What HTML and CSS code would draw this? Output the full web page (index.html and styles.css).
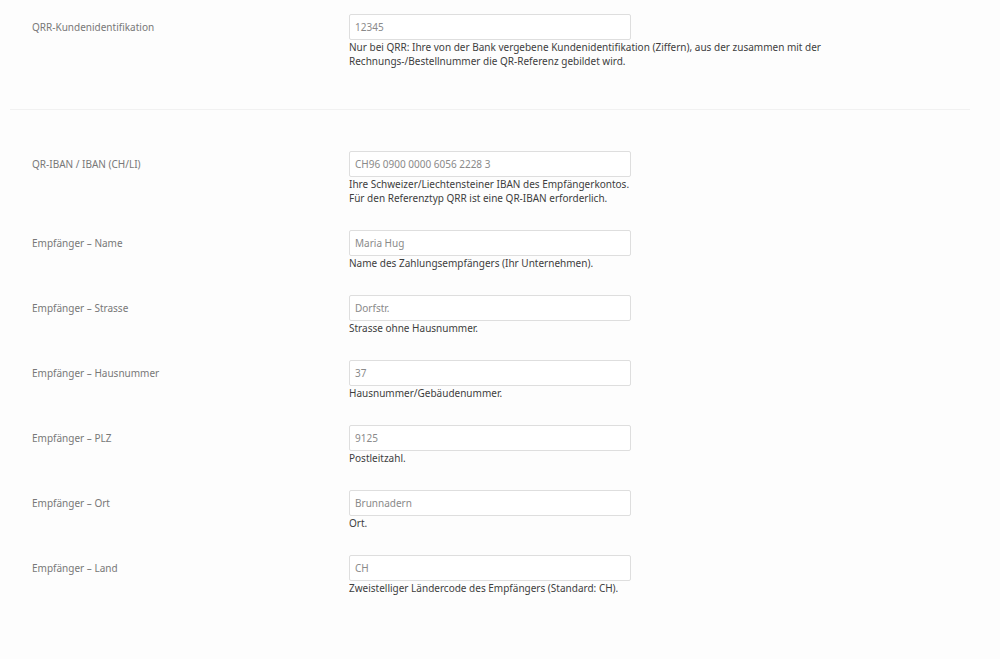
FILE: index.html
```html
<!DOCTYPE html>
<html lang="de">
<head>
<meta charset="utf-8">
<title>QR-Rechnung Einstellungen</title>
<link rel="stylesheet" href="styles.css">
</head>
<body>
<div class="page">
  <section class="section section-first">
    <div class="row">
      <label class="label">QRR-Kundenidentifikation</label>
      <div class="field">
        <div class="input">12345</div>
        <p class="help">Nur bei QRR: Ihre von der Bank vergebene Kundenidentifikation (Ziffern), aus der zusammen mit der Rechnungs-/Bestellnummer die QR-Referenz gebildet wird.</p>
      </div>
    </div>
  </section>
  <section class="section section-second">
    <div class="row">
      <label class="label">QR-IBAN / IBAN (CH/LI)</label>
      <div class="field">
        <div class="input">CH96 0900 0000 6056 2228 3</div>
        <p class="help">Ihre Schweizer/Liechtensteiner IBAN des Empfängerkontos.<br>Für den Referenztyp QRR ist eine QR-IBAN erforderlich.</p>
      </div>
    </div>
    <div class="row">
      <label class="label">Empfänger – Name</label>
      <div class="field">
        <div class="input">Maria Hug</div>
        <p class="help">Name des Zahlungsempfängers (Ihr Unternehmen).</p>
      </div>
    </div>
    <div class="row">
      <label class="label">Empfänger – Strasse</label>
      <div class="field">
        <div class="input">Dorfstr.</div>
        <p class="help">Strasse ohne Hausnummer.</p>
      </div>
    </div>
    <div class="row">
      <label class="label">Empfänger – Hausnummer</label>
      <div class="field">
        <div class="input">37</div>
        <p class="help">Hausnummer/Gebäudenummer.</p>
      </div>
    </div>
    <div class="row">
      <label class="label">Empfänger – PLZ</label>
      <div class="field">
        <div class="input">9125</div>
        <p class="help">Postleitzahl.</p>
      </div>
    </div>
    <div class="row">
      <label class="label">Empfänger – Ort</label>
      <div class="field">
        <div class="input">Brunnadern</div>
        <p class="help">Ort.</p>
      </div>
    </div>
    <div class="row">
      <label class="label">Empfänger – Land</label>
      <div class="field">
        <div class="input">CH</div>
        <p class="help">Zweistelliger Ländercode des Empfängers (Standard: CH).</p>
      </div>
    </div>
  </section>
</div>
</body>
</html>
```

FILE: styles.css
```css
html, body {
  margin: 0;
  padding: 0;
  background: #fdfdfd;
}

body {
  font-family: "Noto Sans", "Open Sans", "DejaVu Sans", sans-serif;
  font-size: 10px;
  color: #444;
}

.page {
  width: 960px;
  margin-left: 10px;
}

.section-first {
  padding-top: 14px;
  padding-bottom: 16px;
  border-bottom: 1px solid #f1f1f1;
}

.section-second {
  padding-top: 41px;
}

.row {
  display: grid;
  grid-template-columns: 317px 480px;
  padding-left: 22px;
  margin-bottom: 25px;
}

.label {
  color: #787878;
  line-height: 26px;
}

.field {
  display: flex;
  flex-direction: column;
}

.input {
  width: 270px;
  height: 24px;
  line-height: 24px;
  padding: 0 5px;
  border: 1px solid #dedede;
  border-radius: 2px;
  background: #fff;
  color: #8a8a8a;
}

.help {
  margin: 0;
  line-height: 14px;
  color: #3e3e3e;
}
```
